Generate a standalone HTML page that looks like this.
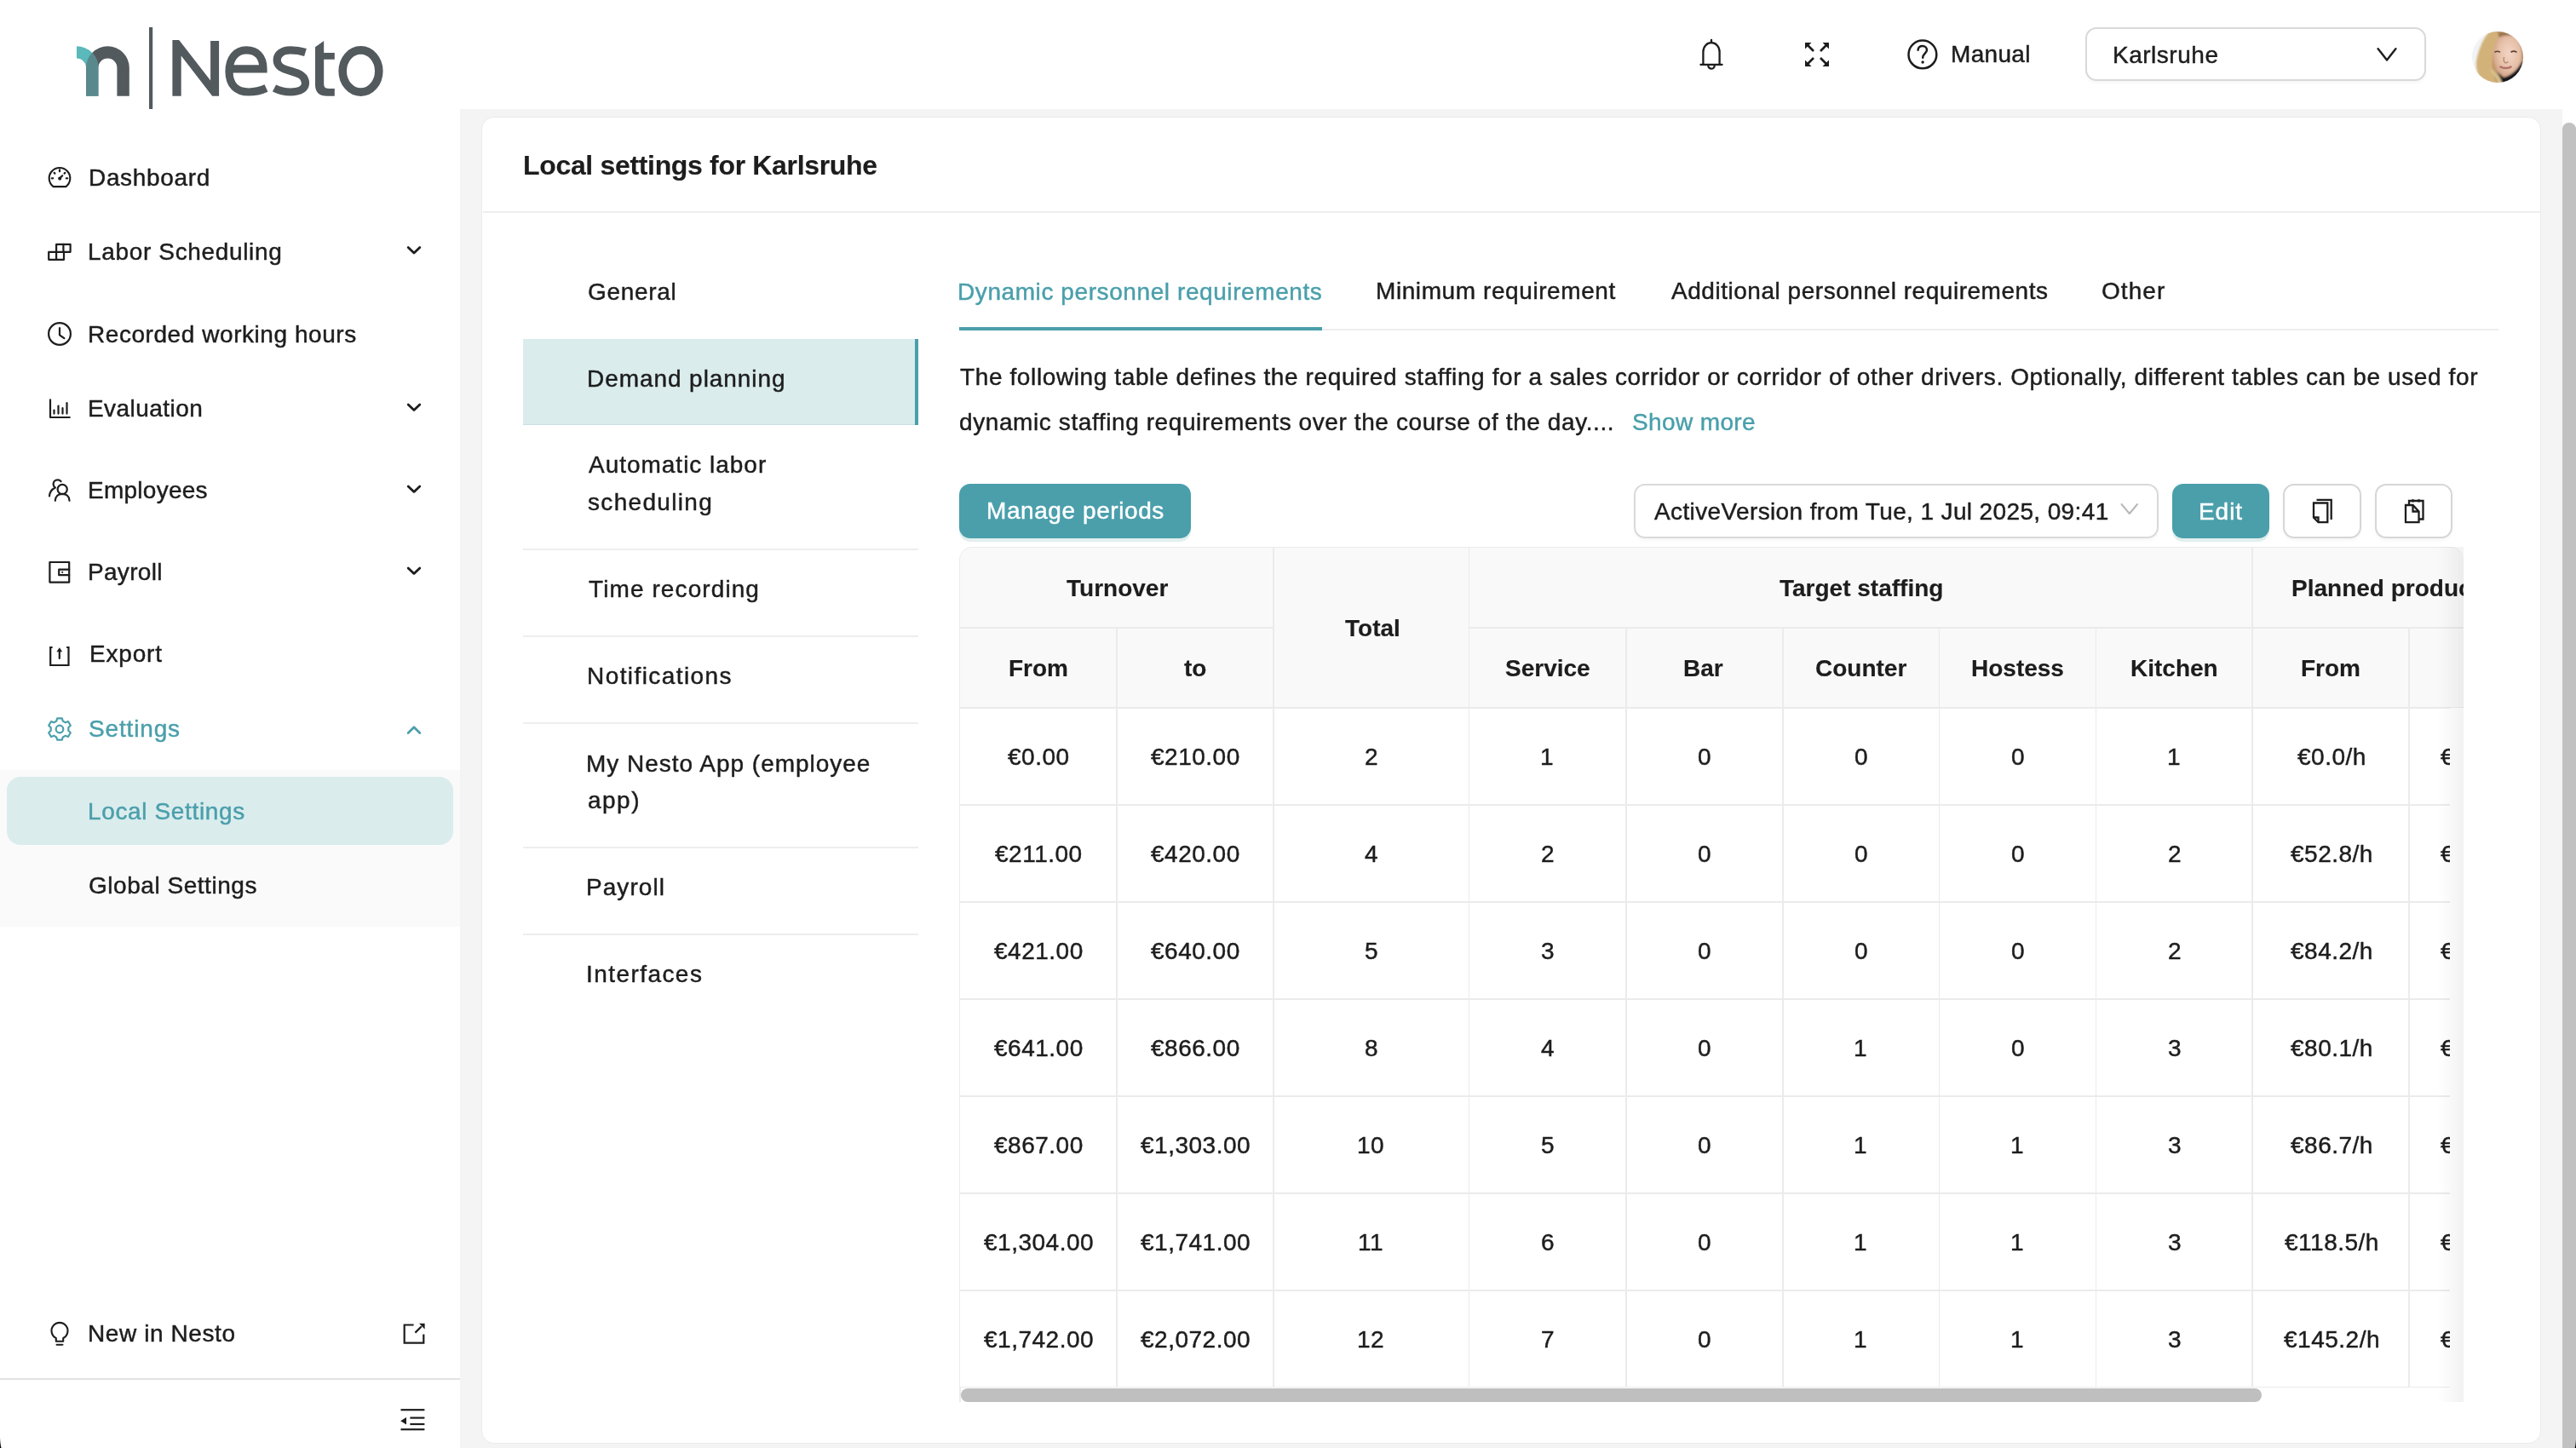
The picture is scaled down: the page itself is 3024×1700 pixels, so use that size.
<!DOCTYPE html>
<html><head><meta charset="utf-8"><style>
html,body{margin:0;padding:0;}
body{width:3024px;height:1700px;position:relative;overflow:hidden;background:#fff;font-family:"Liberation Sans",sans-serif;}
.abs{position:absolute;}
.t{position:absolute;white-space:nowrap;-webkit-text-stroke:0.45px currentColor;will-change:transform;}
</style></head><body>
<svg class="abs" style="left:0;top:0" width="470" height="130" viewBox="0 0 470 130">
<defs><clipPath id="tealc"><path d="M90,54.2 A25.4,25.4 0 0 1 115.4,79.6 L115.4,112.7 L101,112.7 L101,79.6 A11,11 0 0 0 90,68.6 Z"/></clipPath></defs>
<path fill="#535a5e" d="M101,112.7 L101,79.6 A25.4,25.4 0 0 1 151.8,79.6 L151.8,112.7 L137.4,112.7 L137.4,79.6 A11,11 0 0 0 115.4,79.6 L115.4,112.7 Z"/>
<path fill="#5bb8bb" d="M90,54.2 A25.4,25.4 0 0 1 115.4,79.6 L115.4,112.7 L101,112.7 L101,79.6 A11,11 0 0 0 90,68.6 Z"/>
<g clip-path="url(#tealc)"><path fill="#5a898d" d="M101,112.7 L101,79.6 A25.4,25.4 0 0 1 151.8,79.6 L151.8,112.7 L137.4,112.7 L137.4,79.6 A11,11 0 0 0 115.4,79.6 L115.4,112.7 Z"/></g>
<rect x="175" y="32" width="4.2" height="96" fill="#535a5e"/>
<g fill="#535a5e">
<path d="M202.4,47 L210.2,47 L247.1,94.4 L247.1,48 L257.1,48 L257.1,112.8 L249.2,112.8 L212.7,65.6 L212.7,112.8 L202.4,112.8 Z"/>
</g>
<g fill="none" stroke="#535a5e" stroke-width="9.2">
<path d="M269.2,80.9 L309,80.9 C309,66 301,58.9 289.3,58.9 C276.5,58.9 269,69 269,84 C269,100 278,108 292,108 C299,108 306,106.5 312.5,103.5"/>
<path d="M358.5,61.5 C352,59.5 347,58.9 341,58.9 C331,58.9 325.2,64 325.2,70.5 C325.2,78 331,80.5 341.5,83.5 C352,86.5 358.5,89.5 358.5,97.5 C358.5,104 352,108 341,108 C334,108 328,106.5 322,103.5"/>
</g><path fill="#535a5e" d="M370,55.2 L380.2,48 L380.2,62 L392.8,62 L392.8,69.8 L380.2,69.8 L380.2,97.5 C380.2,102.3 381.6,103.9 386,103.9 L392.8,103.9 L392.8,112.8 L384.5,112.8 C374.5,112.8 370,108.3 370,99.5 Z"/><g fill="none" stroke="#535a5e" stroke-width="9.6">
<ellipse cx="423.5" cy="83.5" rx="21.3" ry="24.6"/>
</g>
</svg><svg class="abs" style="left:1990px;top:40px" width="40" height="48" viewBox="1990 40 40 48">
<g fill="none" stroke="#1d1d1d" stroke-width="2.3" stroke-linecap="round" stroke-linejoin="round">
<path d="M1999.4,75.5 L1999.4,61 C1999.4,54.5 2003.8,50.2 2009,50.2 C2014.2,50.2 2018.6,54.5 2018.6,61 L2018.6,75.5"/>
<path d="M1996.4,75.8 L2021.6,75.8"/>
<path d="M2005.3,77 A3.7,3.7 0 0 0 2012.7,77"/>
<path d="M2009,46.8 L2009,50"/>
</g></svg><svg class="abs" style="left:2114px;top:45px" width="38" height="38" viewBox="2114 45 38 38">
<g fill="none" stroke="#1d1d1d" stroke-width="2.6">
<path d="M2120.5,51.5 L2129,60"/><path d="M2145.5,51.5 L2137,60"/>
<path d="M2120.5,76.5 L2129,68"/><path d="M2145.5,76.5 L2137,68"/>
</g>
<g fill="#1d1d1d">
<path d="M2119,50 L2126.5,50 L2119,57.5 Z"/><path d="M2147,50 L2139.5,50 L2147,57.5 Z"/>
<path d="M2119,78 L2126.5,78 L2119,70.5 Z"/><path d="M2147,78 L2139.5,78 L2147,70.5 Z"/>
</g></svg><svg class="abs" style="left:2234px;top:41px" width="46" height="46" viewBox="2234 41 46 46">
<g fill="none" stroke="#1d1d1d" stroke-width="2.5" stroke-linecap="round">
<circle cx="2256.9" cy="63.9" r="16.4"/>
<path d="M2251.6,58.8 C2251.6,55.6 2254,54 2256.8,54 C2259.8,54 2262,56 2262,58.6 C2262,62.5 2257.2,63 2257.2,67.8"/>
</g><circle cx="2257.1" cy="73" r="1.7" fill="#1d1d1d"/></svg><div class="t" style="left:2290.45px;top:47.30px;font-size:28px;line-height:34px;font-weight:400;color:#1d1d1d;letter-spacing:0.310px;">Manual</div><div class="abs" style="left:2448.3px;top:31.8px;width:399.6px;height:63.6px;box-sizing:border-box;border:2px solid #d9d9d9;border-radius:13px;background:#fff;box-shadow:0 3px 3px rgba(0,0,0,0.03)"></div><div class="t" style="left:2479.75px;top:48.30px;font-size:28px;line-height:34px;font-weight:400;color:#1d1d1d;letter-spacing:0.516px;">Karlsruhe</div><svg class="abs" style="left:2784px;top:52px" width="36" height="26" viewBox="2784 52 36 26">
<path d="M2791.6,57.2 L2802,70.6 L2812.4,57.2" fill="none" stroke="#1d1d1d" stroke-width="2.4" stroke-linecap="round" stroke-linejoin="round"/></svg><svg class="abs" style="left:2902px;top:36.8px" width="60" height="60" viewBox="0 0 60 60">
<defs><clipPath id="av"><circle cx="30" cy="30" r="30"/></clipPath>
<filter id="bl" x="-20%" y="-20%" width="140%" height="140%"><feGaussianBlur stdDeviation="1.1"/></filter>
<filter id="bl2"><feGaussianBlur stdDeviation="0.6"/></filter>
<radialGradient id="face" cx="0.55" cy="0.45" r="0.6"><stop offset="0" stop-color="#f3d6c6"/><stop offset="0.6" stop-color="#e6c0a8"/><stop offset="1" stop-color="#cf9e80"/></radialGradient></defs>
<g clip-path="url(#av)">
<rect width="60" height="60" fill="#f1f3f5"/>
<g filter="url(#bl)">
<path d="M24,-2 L62,-2 L62,60 L20,60 Z" fill="#b98f5a"/>
<path d="M26,6 C34,1 50,2 56,12 C60,22 59,40 54,48 C48,55 38,56 31,50 C25,44 24,30 25,20 Z" fill="url(#face)"/>
<path d="M56,14 C60,20 61,36 58,46 L62,46 L62,10 Z" fill="#a27a4c"/>
<path d="M20,60 L22,45 C28,46 33,50 37,54 C45,52 53,46 58,36 L62,34 L62,62 L20,62 Z" fill="#17171b"/>
<path d="M22,-2 C30,-1 35,2 33,4 C27,10 25,20 24,32 C23,42 26,52 30,62 L12,62 C6,50 3,40 6,30 C9,18 14,6 22,-2 Z" fill="#d3b27a"/>
<path d="M23,44 C28,46 33,52 36,62 L30,62 C28,54 25,49 21,46 Z" fill="#dcc08c"/>
<path d="M30,2 C38,-1 48,0 54,6 C46,4 38,4 32,7 Z" fill="#9c7650"/>
</g>
<g filter="url(#bl2)">
<path d="M26.5,24.2 C28.5,23 31,23 33,24.4" stroke="#5e4234" stroke-width="1.6" fill="none"/>
<path d="M45.5,24.2 C47.5,23 50.5,23 52.5,24.4" stroke="#5e4234" stroke-width="1.6" fill="none"/>
<path d="M37.5,30 C37,33 36.5,35 38.5,36.5 C40,37 41.5,36.5 42.5,35.5" stroke="#b88a72" stroke-width="1.4" fill="none"/>
<path d="M32.5,41 C37,43.5 42,43.8 46.5,41" stroke="#b07068" stroke-width="2.4" fill="none"/>
</g>
</g></svg><div class="abs" style="left:0;top:903.7px;width:540px;height:184.5px;background:#fafafa"></div><div class="abs" style="left:8px;top:911.7px;width:524px;height:80px;background:#dbeced;border-radius:16px"></div><div class="abs" style="left:0;top:1617.5px;width:540px;height:2px;background:#e3e3e3"></div><div class="t" style="left:103.55px;top:191.70px;font-size:28px;line-height:34px;font-weight:400;color:#1d1d1d;letter-spacing:0.666px;">Dashboard</div><div class="t" style="left:102.75px;top:279.30px;font-size:28px;line-height:34px;font-weight:400;color:#1d1d1d;letter-spacing:0.655px;">Labor Scheduling</div><div class="t" style="left:102.75px;top:375.60px;font-size:28px;line-height:34px;font-weight:400;color:#1d1d1d;letter-spacing:0.560px;">Recorded working hours</div><div class="t" style="left:102.75px;top:463.30px;font-size:28px;line-height:34px;font-weight:400;color:#1d1d1d;letter-spacing:0.442px;">Evaluation</div><div class="t" style="left:103.25px;top:559.30px;font-size:28px;line-height:34px;font-weight:400;color:#1d1d1d;letter-spacing:0.256px;">Employees</div><div class="t" style="left:103.25px;top:655.30px;font-size:28px;line-height:34px;font-weight:400;color:#1d1d1d;letter-spacing:0.300px;">Payroll</div><div class="t" style="left:105.05px;top:751.30px;font-size:28px;line-height:34px;font-weight:400;color:#1d1d1d;letter-spacing:0.800px;">Export</div><div class="t" style="left:103.75px;top:839.30px;font-size:28px;line-height:34px;font-weight:400;color:#4a9fab;letter-spacing:0.846px;">Settings</div><div class="t" style="left:102.75px;top:935.70px;font-size:28px;line-height:34px;font-weight:400;color:#4a9fab;letter-spacing:0.637px;">Local Settings</div><div class="t" style="left:103.62px;top:1023.30px;font-size:28px;line-height:34px;font-weight:400;color:#1d1d1d;letter-spacing:0.536px;">Global Settings</div><div class="t" style="left:103.15px;top:1549.30px;font-size:28px;line-height:34px;font-weight:400;color:#1d1d1d;letter-spacing:0.589px;">New in Nesto</div><svg class="abs" style="left:0;top:0" width="540" height="1700" viewBox="0 0 540 1700">
<g fill="none" stroke="#1d1d1d" stroke-width="2.2" stroke-linecap="round" stroke-linejoin="round">
<!-- dashboard -->
<path d="M62.6,219.1 A12.3,12.3 0 1 1 77.4,219.1 Z" stroke-width="2.1"/>
<path d="M70,209.6 L73.2,206.2"/>
<circle cx="70.2" cy="209.6" r="1.0" fill="#1d1d1d"/>
<path d="M70,199.4 V201.3"/><path d="M63.7,202.9 L64.4,203.6"/><path d="M76.3,202.9 L75.6,203.6"/>
<path d="M60.8,209.3 H62.2"/><path d="M79.2,209.3 H77.8"/>
<!-- labor -->
<path d="M57.2,295.8 H75 V304.8 H57.2 Z"/><path d="M66.1,295.8 V304.8"/>
<path d="M66.1,295.8 V286.8 H82.6 V295.8 H75"/><path d="M74.4,286.8 V295.8"/>
<!-- clock -->
<circle cx="70" cy="392" r="12.9"/>
<path d="M70,385 V393.3 L75.4,397.2"/>
<!-- chart -->
<path d="M59,469.3 V490 H81.8"/>
<path d="M63.5,481.5 V485.6"/><path d="M68.5,476.5 V485.6"/><path d="M73.5,479 V485.6"/><path d="M78.5,473.2 V485.6"/>
<!-- employees -->
<circle cx="73.2" cy="574.5" r="5.6"/>
<path d="M64.8,587.8 C65,582.5 68.6,579.8 73.2,579.8 C77.8,579.8 81.3,582.5 81.5,587.8"/>
<path d="M71.6,565.2 C70.6,564 69.2,563.4 67.6,563.4 C64.8,563.4 62.6,565.6 62.6,568.4 C62.6,570.2 63.5,571.6 64.8,572.5 C60.8,574.5 58.2,578.2 58,582.5"/>
<!-- payroll -->
<path d="M58.4,660 H81.2 V683.6 H58.4 Z"/>
<path d="M81.2,668.6 H69.2 V675.2 H81.2"/>
<!-- export -->
<path d="M61.6,760 H59.2 V781 H80.5 V760 H78.1" stroke-linecap="butt" stroke-linejoin="miter"/>
<path d="M69.8,773 V763.5"/>
</g><path d="M66.4,765.2 L69.8,760.2 L73.2,765.2 Z" fill="#1d1d1d"/><g fill="none" stroke="#1d1d1d" stroke-width="2.2" stroke-linecap="round" stroke-linejoin="round">
<!-- bulb -->
<path d="M65.8,1570.9 A9.5,9.5 0 1 1 74.2,1570.9 V1574.8 H65.8 Z" stroke-width="2.1"/>
<path d="M66.6,1578.7 H73.4" stroke-width="2.1"/>
<!-- external -->
<path d="M485.6,1555.5 H474.7 V1576.6 H497.3 V1566.4" stroke-linecap="butt" stroke-linejoin="miter"/>
<path d="M487.4,1564.6 L494.8,1557.2" stroke-linecap="butt"/>
</g><path d="M492,1553.8 L498.6,1553.8 L498.6,1560.4 Z" fill="#1d1d1d"/><g fill="none" stroke="#1d1d1d" stroke-width="2.2" stroke-linecap="round" stroke-linejoin="round">
<!-- chevrons -->
</g><g fill="none" stroke="#1d1d1d" stroke-width="2.8" stroke-linecap="round" stroke-linejoin="round">
<path d="M479.2,290.5 L486,297 L492.8,290.5"/>
<path d="M479.2,474.9 L486,481.4 L492.8,474.9"/>
<path d="M479.2,570.9 L486,577.4 L492.8,570.9"/>
<path d="M479.2,666.9 L486,673.4 L492.8,666.9"/>
</g><g fill="none" stroke="#1d1d1d" stroke-width="2.2" stroke-linecap="round" stroke-linejoin="round">
<!-- collapse -->
<path d="M470.5,1655.2 H498.4" stroke-linecap="butt"/><path d="M481.4,1664.6 H498.4" stroke-linecap="butt"/><path d="M481.4,1672 H498.4" stroke-linecap="butt"/><path d="M470.5,1678.2 H498.4" stroke-linecap="butt"/>
</g>
<path d="M470.2,1668.3 L477,1664 L477,1672.6 Z" fill="#1d1d1d"/>
<circle cx="73.2" cy="671.8" r="1.1" fill="#1d1d1d"/>
<g fill="none" stroke="#4a9fab" stroke-width="2.2" stroke-linecap="round" stroke-linejoin="round">
<path d="M479.2,860.4 L486,853.8 L492.8,860.4" stroke-width="2.8"/>
<circle cx="70" cy="856" r="4.3"/>
<path d="M67.2,843.3 H72.8 L73.8,846.6 L76.8,848.2 L80,847 L82.8,851.8 L80.3,854.2 V857.8 L82.8,860.2 L80,865 L76.8,863.8 L73.8,865.4 L72.8,868.7 H67.2 L66.2,865.4 L63.2,863.8 L60,865 L57.2,860.2 L59.7,857.8 V854.2 L57.2,851.8 L60,847 L63.2,848.2 L66.2,846.6 Z"/>
</g>
</svg><div class="abs" style="left:540px;top:128px;width:2468px;height:1572px;background:#f4f4f4"></div><div class="abs" style="left:3008px;top:0;width:16px;height:1700px;background:#fff"></div><div class="abs" style="left:3008.3px;top:144px;width:15.4px;height:1600px;background:#c1c1c1;border-radius:7.7px"></div><div class="abs" style="left:564.6px;top:136.6px;width:2418.6px;height:1558.2px;box-sizing:border-box;background:#fff;border:1.5px solid #ebebeb;border-radius:15px"></div><div class="t" style="left:614.38px;top:174.81px;font-size:32px;line-height:38px;font-weight:700;color:#1d1d1d;letter-spacing:-0.329px;-webkit-text-stroke:0.15px currentColor;">Local settings for Karlsruhe</div><div class="abs" style="left:567px;top:247.5px;width:2415px;height:2px;background:#eeeeee"></div><div class="abs" style="left:614px;top:397.5px;width:463px;height:101.5px;background:#dbeced;border-bottom:1.5px solid #c9dfe1;box-sizing:border-box"></div><div class="abs" style="left:1074.4px;top:397.5px;width:3.4px;height:101.5px;background:#4a9fab"></div><div class="abs" style="left:614px;top:644px;width:464px;height:2px;background:#eeeeee"></div><div class="abs" style="left:614px;top:746px;width:464px;height:2px;background:#eeeeee"></div><div class="abs" style="left:614px;top:847.7px;width:464px;height:2px;background:#eeeeee"></div><div class="abs" style="left:614px;top:993.9px;width:464px;height:2px;background:#eeeeee"></div><div class="abs" style="left:614px;top:1095.6px;width:464px;height:2px;background:#eeeeee"></div><div class="t" style="left:690.02px;top:326.30px;font-size:28px;line-height:34px;font-weight:400;color:#1d1d1d;letter-spacing:0.704px;">General</div><div class="t" style="left:689.15px;top:428.10px;font-size:28px;line-height:34px;font-weight:400;color:#1d1d1d;letter-spacing:0.930px;">Demand planning</div><div class="t" style="left:691.08px;top:529.30px;font-size:28px;line-height:34px;font-weight:400;color:#1d1d1d;letter-spacing:0.979px;">Automatic labor</div><div class="t" style="left:690.45px;top:573.30px;font-size:28px;line-height:34px;font-weight:400;color:#1d1d1d;letter-spacing:1.317px;">scheduling</div><div class="t" style="left:690.58px;top:675.10px;font-size:28px;line-height:34px;font-weight:400;color:#1d1d1d;letter-spacing:1.096px;">Time recording</div><div class="t" style="left:688.95px;top:777.10px;font-size:28px;line-height:34px;font-weight:400;color:#1d1d1d;letter-spacing:1.421px;">Notifications</div><div class="t" style="left:688.45px;top:879.90px;font-size:28px;line-height:34px;font-weight:400;color:#1d1d1d;letter-spacing:0.982px;">My Nesto App (employee</div><div class="t" style="left:689.58px;top:923.30px;font-size:28px;line-height:34px;font-weight:400;color:#1d1d1d;letter-spacing:1.483px;">app)</div><div class="t" style="left:688.45px;top:1025.10px;font-size:28px;line-height:34px;font-weight:400;color:#1d1d1d;letter-spacing:1.050px;">Payroll</div><div class="t" style="left:688.08px;top:1127.30px;font-size:28px;line-height:34px;font-weight:400;color:#1d1d1d;letter-spacing:1.436px;">Interfaces</div><div class="abs" style="left:1126px;top:386px;width:1807px;height:2px;background:#eeeeee"></div><div class="abs" style="left:1126px;top:384px;width:426px;height:4.2px;background:#4a9fab"></div><div class="t" style="left:1124.15px;top:325.50px;font-size:28px;line-height:34px;font-weight:400;color:#4a9fab;letter-spacing:0.585px;">Dynamic personnel requirements</div><div class="t" style="left:1614.95px;top:325.10px;font-size:28px;line-height:34px;font-weight:400;color:#1d1d1d;letter-spacing:0.585px;">Minimum requirement</div><div class="t" style="left:1962.08px;top:325.30px;font-size:28px;line-height:34px;font-weight:400;color:#1d1d1d;letter-spacing:0.533px;">Additional personnel requirements</div><div class="t" style="left:2466.62px;top:325.30px;font-size:28px;line-height:34px;font-weight:400;color:#1d1d1d;letter-spacing:1.062px;">Other</div><div class="t" style="left:1126.67px;top:425.50px;font-size:28px;line-height:34px;font-weight:400;color:#1d1d1d;letter-spacing:0.612px;">The following table defines the required staffing for a sales corridor or corridor of other drivers. Optionally, different tables can be used for</div><div class="t" style="left:1126.17px;top:479.00px;font-size:28px;line-height:34px;font-weight:400;color:#1d1d1d;letter-spacing:0.594px;">dynamic staffing requirements over the course of the day....</div><div class="t" style="left:1916.15px;top:479.00px;font-size:28px;line-height:34px;font-weight:400;color:#4a9fab;letter-spacing:0.372px;">Show more</div><div class="abs" style="left:1126px;top:568px;width:272px;height:64px;background:#4a9fab;border-radius:13px;box-shadow:0 4px 0 #e1efee"></div><div class="t" style="left:1157.75px;top:583.10px;font-size:28px;line-height:34px;font-weight:400;color:#ffffff;letter-spacing:0.577px;">Manage periods</div><div class="abs" style="left:1917.5px;top:568px;width:616px;height:63.5px;box-sizing:border-box;border:2px solid #d9d9d9;border-radius:13px;background:#fff;box-shadow:0 3px 3px rgba(0,0,0,0.03)"></div><div class="t" style="left:1941.88px;top:583.60px;font-size:28px;line-height:34px;font-weight:400;color:#1d1d1d;letter-spacing:0.373px;">ActiveVersion from Tue, 1 Jul 2025, 09:41</div><svg class="abs" style="left:2486px;top:588px" width="28" height="20" viewBox="2486 588 28 20">
<path d="M2490.5,592 L2499.8,603 L2509,592" fill="none" stroke="#b8b8b8" stroke-width="2" stroke-linecap="round" stroke-linejoin="round"/></svg><div class="abs" style="left:2550px;top:568px;width:114px;height:64px;background:#4a9fab;border-radius:13px;box-shadow:0 4px 0 #e1efee"></div><div class="t" style="left:2580.75px;top:583.60px;font-size:28px;line-height:34px;font-weight:400;color:#ffffff;letter-spacing:0.942px;">Edit</div><div class="abs" style="left:2680px;top:568px;width:91.5px;height:63.5px;box-sizing:border-box;border:2px solid #d6d6d6;border-radius:13px;background:#fff;box-shadow:0 3px 3px rgba(0,0,0,0.03)"></div><div class="abs" style="left:2788.3px;top:568px;width:91px;height:63.5px;box-sizing:border-box;border:2px solid #d6d6d6;border-radius:13px;background:#fff;box-shadow:0 3px 3px rgba(0,0,0,0.03)"></div><svg class="abs" style="left:2700px;top:580px" width="170" height="44" viewBox="2700 580 170 44">
<g fill="none" stroke="#1d1d1d" stroke-width="2.3" stroke-linejoin="miter">
<path d="M2716,590.5 H2732.3 V613.2 H2721.5 L2716,607.5 Z"/>
<path d="M2716,607.5 H2721.5 V613.2"/>
<path d="M2719.5,586.8 H2736.7 V610"/>
<path d="M2824,593 H2832.5 L2839.5,600.5 V613.2 H2824 Z"/>
<path d="M2832.5,593 V600.5 H2839.5"/>
<path d="M2828,593 V588 H2844.5 V609.5 H2839.5"/>
<path d="M2832.5,586.2 V589.5"/><path d="M2839.5,586.2 V589.5"/>
</g></svg><div class="abs" style="left:1126px;top:642px;width:1766px;height:1004px;overflow:hidden;border-radius:15px 15px 0 0"><div class="abs" style="left:0;top:0;width:2000px;height:189px;background:#f9f9f9"></div><div class="abs" style="left:0;top:0;width:1766px;height:1004px;box-sizing:border-box;border-top:1.5px solid #ebebeb;border-left:1.5px solid #ebebeb;border-radius:15px 15px 0 0"></div><div class="abs" style="left:1px;top:94.05px;width:368px;height:1.5px;background:#ebebeb"></div><div class="abs" style="left:599px;top:94.05px;width:1288px;height:1.5px;background:#ebebeb"></div><div class="abs" style="left:1px;top:188.25px;width:1886px;height:1.5px;background:#ebebeb"></div><div class="abs" style="left:1px;top:302.25px;width:1886px;height:1.5px;background:#ebebeb"></div><div class="abs" style="left:1px;top:416.25px;width:1886px;height:1.5px;background:#ebebeb"></div><div class="abs" style="left:1px;top:530.25px;width:1886px;height:1.5px;background:#ebebeb"></div><div class="abs" style="left:1px;top:644.25px;width:1886px;height:1.5px;background:#ebebeb"></div><div class="abs" style="left:1px;top:758.25px;width:1886px;height:1.5px;background:#ebebeb"></div><div class="abs" style="left:1px;top:872.25px;width:1886px;height:1.5px;background:#ebebeb"></div><div class="abs" style="left:1px;top:986.25px;width:1886px;height:1.5px;background:#ebebeb"></div><div class="abs" style="left:184.05px;top:94.79999999999995px;width:1.5px;height:892.2px;background:#ebebeb"></div><div class="abs" style="left:368.05px;top:0px;width:1.5px;height:987px;background:#ebebeb"></div><div class="abs" style="left:597.85px;top:0px;width:1.5px;height:987px;background:#ebebeb"></div><div class="abs" style="left:782.05px;top:94.79999999999995px;width:1.5px;height:892.2px;background:#ebebeb"></div><div class="abs" style="left:966.05px;top:94.79999999999995px;width:1.5px;height:892.2px;background:#ebebeb"></div><div class="abs" style="left:1149.85px;top:94.79999999999995px;width:1.5px;height:892.2px;background:#ebebeb"></div><div class="abs" style="left:1333.85px;top:94.79999999999995px;width:1.5px;height:892.2px;background:#ebebeb"></div><div class="abs" style="left:1517.45px;top:0px;width:1.5px;height:987px;background:#ebebeb"></div><div class="abs" style="left:1701.45px;top:94.79999999999995px;width:1.5px;height:892.2px;background:#ebebeb"></div><div class="t" style="left:125.74px;top:31.90px;font-size:28px;line-height:34px;font-weight:700;color:#1d1d1d;letter-spacing:0.000px;-webkit-text-stroke:0.15px currentColor;">Turnover</div><div class="t" style="left:452.50px;top:78.60px;font-size:28px;line-height:34px;font-weight:700;color:#1d1d1d;letter-spacing:0.000px;-webkit-text-stroke:0.15px currentColor;">Total</div><div class="t" style="left:963.12px;top:31.90px;font-size:28px;line-height:34px;font-weight:700;color:#1d1d1d;letter-spacing:0.000px;-webkit-text-stroke:0.15px currentColor;">Target staffing</div><div class="t" style="left:1563.69px;top:31.90px;font-size:28px;line-height:34px;font-weight:700;color:#1d1d1d;letter-spacing:0.000px;-webkit-text-stroke:0.15px currentColor;">Planned productivity</div><div class="t" style="left:57.69px;top:125.80px;font-size:28px;line-height:34px;font-weight:700;color:#1d1d1d;letter-spacing:0.000px;-webkit-text-stroke:0.15px currentColor;">From</div><div class="t" style="left:263.62px;top:125.80px;font-size:28px;line-height:34px;font-weight:700;color:#1d1d1d;letter-spacing:0.000px;-webkit-text-stroke:0.15px currentColor;">to</div><div class="t" style="left:640.75px;top:125.80px;font-size:28px;line-height:34px;font-weight:700;color:#1d1d1d;letter-spacing:0.000px;-webkit-text-stroke:0.15px currentColor;">Service</div><div class="t" style="left:850.44px;top:125.80px;font-size:28px;line-height:34px;font-weight:700;color:#1d1d1d;letter-spacing:0.000px;-webkit-text-stroke:0.15px currentColor;">Bar</div><div class="t" style="left:1004.50px;top:125.80px;font-size:28px;line-height:34px;font-weight:700;color:#1d1d1d;letter-spacing:0.000px;-webkit-text-stroke:0.15px currentColor;">Counter</div><div class="t" style="left:1187.69px;top:125.80px;font-size:28px;line-height:34px;font-weight:700;color:#1d1d1d;letter-spacing:0.000px;-webkit-text-stroke:0.15px currentColor;">Hostess</div><div class="t" style="left:1375.06px;top:125.80px;font-size:28px;line-height:34px;font-weight:700;color:#1d1d1d;letter-spacing:0.000px;-webkit-text-stroke:0.15px currentColor;">Kitchen</div><div class="t" style="left:1575.44px;top:125.80px;font-size:28px;line-height:34px;font-weight:700;color:#1d1d1d;letter-spacing:0.000px;-webkit-text-stroke:0.15px currentColor;">From</div><div class="t" style="left:1781.62px;top:125.80px;font-size:28px;line-height:34px;font-weight:700;color:#1d1d1d;letter-spacing:0.000px;-webkit-text-stroke:0.15px currentColor;">to</div><div class="t" style="left:57.12px;top:229.80px;font-size:28px;line-height:34px;font-weight:400;color:#1d1d1d;letter-spacing:0.500px;">€0.00</div><div class="t" style="left:224.81px;top:229.80px;font-size:28px;line-height:34px;font-weight:400;color:#1d1d1d;letter-spacing:0.500px;">€210.00</div><div class="t" style="left:475.75px;top:229.80px;font-size:28px;line-height:34px;font-weight:400;color:#1d1d1d;letter-spacing:0.000px;">2</div><div class="t" style="left:682.31px;top:229.80px;font-size:28px;line-height:34px;font-weight:400;color:#1d1d1d;letter-spacing:0.000px;">1</div><div class="t" style="left:866.69px;top:229.80px;font-size:28px;line-height:34px;font-weight:400;color:#1d1d1d;letter-spacing:0.000px;">0</div><div class="t" style="left:1050.69px;top:229.80px;font-size:28px;line-height:34px;font-weight:400;color:#1d1d1d;letter-spacing:0.000px;">0</div><div class="t" style="left:1234.69px;top:229.80px;font-size:28px;line-height:34px;font-weight:400;color:#1d1d1d;letter-spacing:0.000px;">0</div><div class="t" style="left:1418.31px;top:229.80px;font-size:28px;line-height:34px;font-weight:400;color:#1d1d1d;letter-spacing:0.000px;">1</div><div class="t" style="left:1571.12px;top:229.80px;font-size:28px;line-height:34px;font-weight:400;color:#1d1d1d;letter-spacing:0.500px;">€0.0/h</div><div class="t" style="left:1739.06px;top:229.80px;font-size:28px;line-height:34px;font-weight:400;color:#1d1d1d;letter-spacing:0.500px;">€105.0/h</div><div class="t" style="left:42.06px;top:343.80px;font-size:28px;line-height:34px;font-weight:400;color:#1d1d1d;letter-spacing:0.500px;">€211.00</div><div class="t" style="left:224.81px;top:343.80px;font-size:28px;line-height:34px;font-weight:400;color:#1d1d1d;letter-spacing:0.500px;">€420.00</div><div class="t" style="left:475.81px;top:343.80px;font-size:28px;line-height:34px;font-weight:400;color:#1d1d1d;letter-spacing:0.000px;">4</div><div class="t" style="left:682.75px;top:343.80px;font-size:28px;line-height:34px;font-weight:400;color:#1d1d1d;letter-spacing:0.000px;">2</div><div class="t" style="left:866.69px;top:343.80px;font-size:28px;line-height:34px;font-weight:400;color:#1d1d1d;letter-spacing:0.000px;">0</div><div class="t" style="left:1050.69px;top:343.80px;font-size:28px;line-height:34px;font-weight:400;color:#1d1d1d;letter-spacing:0.000px;">0</div><div class="t" style="left:1234.69px;top:343.80px;font-size:28px;line-height:34px;font-weight:400;color:#1d1d1d;letter-spacing:0.000px;">0</div><div class="t" style="left:1418.75px;top:343.80px;font-size:28px;line-height:34px;font-weight:400;color:#1d1d1d;letter-spacing:0.000px;">2</div><div class="t" style="left:1563.06px;top:343.80px;font-size:28px;line-height:34px;font-weight:400;color:#1d1d1d;letter-spacing:0.500px;">€52.8/h</div><div class="t" style="left:1739.06px;top:343.80px;font-size:28px;line-height:34px;font-weight:400;color:#1d1d1d;letter-spacing:0.500px;">€105.0/h</div><div class="t" style="left:41.06px;top:457.80px;font-size:28px;line-height:34px;font-weight:400;color:#1d1d1d;letter-spacing:0.500px;">€421.00</div><div class="t" style="left:224.81px;top:457.80px;font-size:28px;line-height:34px;font-weight:400;color:#1d1d1d;letter-spacing:0.500px;">€640.00</div><div class="t" style="left:475.75px;top:457.80px;font-size:28px;line-height:34px;font-weight:400;color:#1d1d1d;letter-spacing:0.000px;">5</div><div class="t" style="left:682.75px;top:457.80px;font-size:28px;line-height:34px;font-weight:400;color:#1d1d1d;letter-spacing:0.000px;">3</div><div class="t" style="left:866.69px;top:457.80px;font-size:28px;line-height:34px;font-weight:400;color:#1d1d1d;letter-spacing:0.000px;">0</div><div class="t" style="left:1050.69px;top:457.80px;font-size:28px;line-height:34px;font-weight:400;color:#1d1d1d;letter-spacing:0.000px;">0</div><div class="t" style="left:1234.69px;top:457.80px;font-size:28px;line-height:34px;font-weight:400;color:#1d1d1d;letter-spacing:0.000px;">0</div><div class="t" style="left:1418.75px;top:457.80px;font-size:28px;line-height:34px;font-weight:400;color:#1d1d1d;letter-spacing:0.000px;">2</div><div class="t" style="left:1563.06px;top:457.80px;font-size:28px;line-height:34px;font-weight:400;color:#1d1d1d;letter-spacing:0.500px;">€84.2/h</div><div class="t" style="left:1739.06px;top:457.80px;font-size:28px;line-height:34px;font-weight:400;color:#1d1d1d;letter-spacing:0.500px;">€105.0/h</div><div class="t" style="left:41.06px;top:571.80px;font-size:28px;line-height:34px;font-weight:400;color:#1d1d1d;letter-spacing:0.500px;">€641.00</div><div class="t" style="left:224.81px;top:571.80px;font-size:28px;line-height:34px;font-weight:400;color:#1d1d1d;letter-spacing:0.500px;">€866.00</div><div class="t" style="left:475.69px;top:571.80px;font-size:28px;line-height:34px;font-weight:400;color:#1d1d1d;letter-spacing:0.000px;">8</div><div class="t" style="left:682.81px;top:571.80px;font-size:28px;line-height:34px;font-weight:400;color:#1d1d1d;letter-spacing:0.000px;">4</div><div class="t" style="left:866.69px;top:571.80px;font-size:28px;line-height:34px;font-weight:400;color:#1d1d1d;letter-spacing:0.000px;">0</div><div class="t" style="left:1050.31px;top:571.80px;font-size:28px;line-height:34px;font-weight:400;color:#1d1d1d;letter-spacing:0.000px;">1</div><div class="t" style="left:1234.69px;top:571.80px;font-size:28px;line-height:34px;font-weight:400;color:#1d1d1d;letter-spacing:0.000px;">0</div><div class="t" style="left:1418.75px;top:571.80px;font-size:28px;line-height:34px;font-weight:400;color:#1d1d1d;letter-spacing:0.000px;">3</div><div class="t" style="left:1563.06px;top:571.80px;font-size:28px;line-height:34px;font-weight:400;color:#1d1d1d;letter-spacing:0.500px;">€80.1/h</div><div class="t" style="left:1739.06px;top:571.80px;font-size:28px;line-height:34px;font-weight:400;color:#1d1d1d;letter-spacing:0.500px;">€108.2/h</div><div class="t" style="left:41.06px;top:685.80px;font-size:28px;line-height:34px;font-weight:400;color:#1d1d1d;letter-spacing:0.500px;">€867.00</div><div class="t" style="left:212.62px;top:685.80px;font-size:28px;line-height:34px;font-weight:400;color:#1d1d1d;letter-spacing:0.500px;">€1,303.00</div><div class="t" style="left:467.12px;top:685.80px;font-size:28px;line-height:34px;font-weight:400;color:#1d1d1d;letter-spacing:0.500px;">10</div><div class="t" style="left:682.75px;top:685.80px;font-size:28px;line-height:34px;font-weight:400;color:#1d1d1d;letter-spacing:0.000px;">5</div><div class="t" style="left:866.69px;top:685.80px;font-size:28px;line-height:34px;font-weight:400;color:#1d1d1d;letter-spacing:0.000px;">0</div><div class="t" style="left:1050.31px;top:685.80px;font-size:28px;line-height:34px;font-weight:400;color:#1d1d1d;letter-spacing:0.000px;">1</div><div class="t" style="left:1234.31px;top:685.80px;font-size:28px;line-height:34px;font-weight:400;color:#1d1d1d;letter-spacing:0.000px;">1</div><div class="t" style="left:1418.75px;top:685.80px;font-size:28px;line-height:34px;font-weight:400;color:#1d1d1d;letter-spacing:0.000px;">3</div><div class="t" style="left:1563.06px;top:685.80px;font-size:28px;line-height:34px;font-weight:400;color:#1d1d1d;letter-spacing:0.500px;">€86.7/h</div><div class="t" style="left:1739.06px;top:685.80px;font-size:28px;line-height:34px;font-weight:400;color:#1d1d1d;letter-spacing:0.500px;">€130.3/h</div><div class="t" style="left:28.88px;top:799.80px;font-size:28px;line-height:34px;font-weight:400;color:#1d1d1d;letter-spacing:0.500px;">€1,304.00</div><div class="t" style="left:212.62px;top:799.80px;font-size:28px;line-height:34px;font-weight:400;color:#1d1d1d;letter-spacing:0.500px;">€1,741.00</div><div class="t" style="left:468.31px;top:799.80px;font-size:28px;line-height:34px;font-weight:400;color:#1d1d1d;letter-spacing:0.500px;">11</div><div class="t" style="left:682.62px;top:799.80px;font-size:28px;line-height:34px;font-weight:400;color:#1d1d1d;letter-spacing:0.000px;">6</div><div class="t" style="left:866.69px;top:799.80px;font-size:28px;line-height:34px;font-weight:400;color:#1d1d1d;letter-spacing:0.000px;">0</div><div class="t" style="left:1050.31px;top:799.80px;font-size:28px;line-height:34px;font-weight:400;color:#1d1d1d;letter-spacing:0.000px;">1</div><div class="t" style="left:1234.31px;top:799.80px;font-size:28px;line-height:34px;font-weight:400;color:#1d1d1d;letter-spacing:0.000px;">1</div><div class="t" style="left:1418.75px;top:799.80px;font-size:28px;line-height:34px;font-weight:400;color:#1d1d1d;letter-spacing:0.000px;">3</div><div class="t" style="left:1556.06px;top:799.80px;font-size:28px;line-height:34px;font-weight:400;color:#1d1d1d;letter-spacing:0.500px;">€118.5/h</div><div class="t" style="left:1739.06px;top:799.80px;font-size:28px;line-height:34px;font-weight:400;color:#1d1d1d;letter-spacing:0.500px;">€145.1/h</div><div class="t" style="left:28.88px;top:913.80px;font-size:28px;line-height:34px;font-weight:400;color:#1d1d1d;letter-spacing:0.500px;">€1,742.00</div><div class="t" style="left:212.62px;top:913.80px;font-size:28px;line-height:34px;font-weight:400;color:#1d1d1d;letter-spacing:0.500px;">€2,072.00</div><div class="t" style="left:467.31px;top:913.80px;font-size:28px;line-height:34px;font-weight:400;color:#1d1d1d;letter-spacing:0.500px;">12</div><div class="t" style="left:682.75px;top:913.80px;font-size:28px;line-height:34px;font-weight:400;color:#1d1d1d;letter-spacing:0.000px;">7</div><div class="t" style="left:866.69px;top:913.80px;font-size:28px;line-height:34px;font-weight:400;color:#1d1d1d;letter-spacing:0.000px;">0</div><div class="t" style="left:1050.31px;top:913.80px;font-size:28px;line-height:34px;font-weight:400;color:#1d1d1d;letter-spacing:0.000px;">1</div><div class="t" style="left:1234.31px;top:913.80px;font-size:28px;line-height:34px;font-weight:400;color:#1d1d1d;letter-spacing:0.000px;">1</div><div class="t" style="left:1418.75px;top:913.80px;font-size:28px;line-height:34px;font-weight:400;color:#1d1d1d;letter-spacing:0.000px;">3</div><div class="t" style="left:1555.06px;top:913.80px;font-size:28px;line-height:34px;font-weight:400;color:#1d1d1d;letter-spacing:0.500px;">€145.2/h</div><div class="t" style="left:1739.06px;top:913.80px;font-size:28px;line-height:34px;font-weight:400;color:#1d1d1d;letter-spacing:0.500px;">€172.7/h</div></div><div class="abs" style="left:2876px;top:831px;width:16px;height:815px;background:#fff"></div><div class="abs" style="left:1127.5px;top:1629px;width:1764px;height:17px;background:#fff"></div><div class="abs" style="left:1127.9px;top:1630.2px;width:1527.6px;height:15.6px;background:#bfbfbf;border-radius:8px"></div><div class="abs" style="left:1126px;top:1629px;width:1.5px;height:17px;background:#ebebeb"></div><div class="abs" style="left:2862px;top:642px;width:30px;height:1004px;background:linear-gradient(to right, rgba(0,0,0,0), rgba(0,0,0,0.05))"></div><svg class="abs" style="left:0;top:1680px" width="4" height="20" viewBox="0 1680 4 20"><path d="M0,1688 C0.3,1694 0.8,1698 1.6,1700 L0,1700 Z" fill="#000"/></svg><svg class="abs" style="left:3020px;top:1680px" width="4" height="20" viewBox="3020 1680 4 20"><path d="M3024,1690 C3023.7,1695 3023.2,1698 3022.6,1700 L3024,1700 Z" fill="#000"/></svg>
</body></html>
